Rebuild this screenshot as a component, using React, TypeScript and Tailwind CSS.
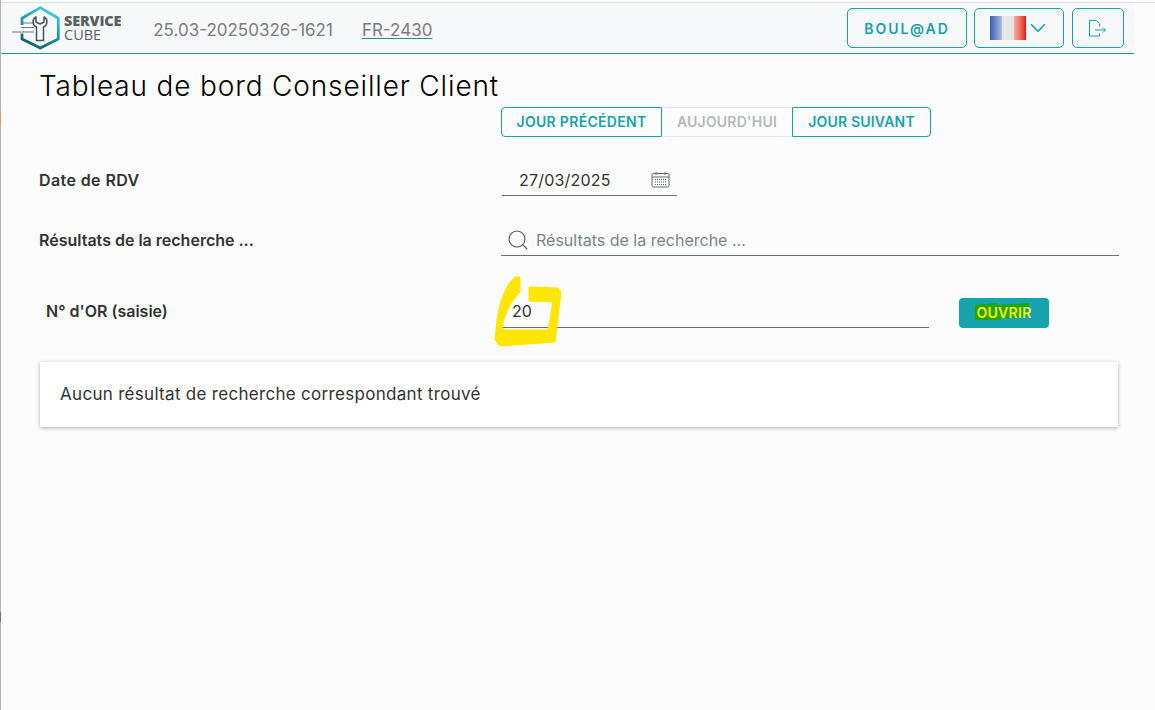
import { ChevronDown, Search } from 'lucide-react'

function Logo() {
  return (
    <svg width="50" height="44" viewBox="10 6 50 44" fill="none">
      <defs>
        <linearGradient id="hex" x1="50" y1="8" x2="30" y2="48" gradientUnits="userSpaceOnUse">
          <stop offset="0" stopColor="#3fd3e0" />
          <stop offset="1" stopColor="#0d5c60" />
        </linearGradient>
      </defs>
      <path d="M21 25 V18.3 L39.3 7.6 L57.3 18.3 V39 L39.3 48 L21 39 V33.5" stroke="url(#hex)" strokeWidth="2.8" strokeLinejoin="round" />
      <path d="M11 32 H33 M20 27.5 H33 M20 23 H32" stroke="#70777a" strokeWidth="1" />
      <path d="M35 17 C31 19 31 25 35.5 27 V40.5 H42.5 V27 C47 25 47 19 43 17 V22 L39 24 L35 22 Z" stroke="#4b5256" strokeWidth="1.5" strokeLinejoin="round" fill="#f6f8fa" />
    </svg>
  )
}

function Calendar() {
  return (
    <svg width="19" height="17" viewBox="0 0 19 17" fill="none" stroke="#5f6b73">
      <rect x="1" y="2.5" width="17" height="13.5" rx="1.5" />
      <path d="M1 6 H18 M5 1 V4 M14 1 V4" />
      <path d="M4 8.5 H15 M4 11 H15 M4 13.5 H15" strokeDasharray="1 1" />
    </svg>
  )
}

function Exit() {
  return (
    <svg width="18" height="17" viewBox="0 0 18 17" fill="none" stroke="#16a3ab" strokeWidth="1">
      <path d="M10.5 6.5 V3.5 L7.5 .5 H.5 V16 H10.5 V13.5" />
      <path d="M6 10 H16.5 M14 7.5 L16.5 10 L14 12.5" />
    </svg>
  )
}

export default function App() {
  return (
    <div className="relative h-[710px] w-[1155px] overflow-hidden bg-[#fcfcfd] pl-[2px] font-['Inter',sans-serif] text-[#333]">
      <div className="-ml-[2px] h-[3px] border-b border-[#e2e2e2] bg-white" />
      <header className="-ml-px flex h-[51px] w-[1133px] items-center border-b border-[#1f9e94] bg-[#f6f8fa]">
        <div className="ml-[10px] flex items-center">
          <Logo />
          <div className="ml-[3px] flex flex-col font-['Open_Sans',sans-serif] text-[14.5px] leading-[14px] text-[#5a5f63]">
            <span className="font-extrabold tracking-[-0.2px]">SERVICE</span>
            <span>CUBE</span>
          </div>
        </div>
        <span className="ml-[32px] mt-[5px] text-[17px] text-[#7d7d7d]">25.03-20250326-1621</span>
        <span className="ml-[29px] mt-[5px] text-[17px] text-[#7d7d7d] underline decoration-[#1f8f88] underline-offset-2">FR-2430</span>
        <div className="ml-auto mr-[10px] flex items-center">
          <button className="flex h-10 w-[120px] items-center justify-center rounded-[5px] border border-[#16a3ab] text-[14px] font-semibold tracking-[2px] text-[#16a3ab]">
            BOUL@AD
          </button>
          <button className="ml-[7px] flex h-10 w-[90px] items-center justify-center gap-0 rounded-[5px] border border-[#16a3ab] pl-[2px]">
            <span className="flex h-[24px] w-[36px] shadow-[inset_0_0_3px_rgba(0,0,0,0.3)]">
              <span className="flex-1 bg-gradient-to-r from-[#3a5fb0] to-[#a9bce6]" />
              <span className="flex-1 bg-[#e6e6e6]" />
              <span className="flex-1 bg-gradient-to-r from-[#f6a89d] to-[#e40000]" />
            </span>
            <ChevronDown className="ml-[-1px] h-[26px] w-[26px] text-[#16a3ab]" strokeWidth={1.6} />
          </button>
          <button className="ml-2 flex h-10 w-[52px] items-center justify-center rounded-[5px] border border-[#16a3ab]">
            <Exit />
          </button>
        </div>
      </header>

      <h1 className="ml-[37px] mt-[14px] text-[28px] font-light leading-[36px] tracking-[0.85px] text-black">Tableau de bord Conseiller Client</h1>

      <div className="ml-[499px] mt-[3px] flex h-[30px] text-[14px] font-semibold">
        <button className="w-[161px] rounded-l-[4px] border border-[#16a3ab] pb-[2px] tracking-[0.3px] text-[#16a3ab]">JOUR PRÉCÉDENT</button>
        <button className="w-[130px] border-y border-[#e4e6e8] pb-[2px] tracking-[0.2px] text-[#b4b9bd]">AUJOURD'HUI</button>
        <button className="w-[139px] rounded-r-[4px] border border-[#16a3ab] pb-[2px] tracking-[0.2px] text-[#16a3ab]">JOUR SUIVANT</button>
      </div>

      <div className="mt-[27px] flex h-[32px] items-center pl-[37px]">
        <span className="w-[463px] text-[16px] font-semibold tracking-[0.4px]">Date de RDV</span>
        <div className="flex h-[32px] w-[175px] items-center justify-between border-b border-[#66727a] pl-[17px] pr-[7px] text-[16px] tracking-[0.2px]">
          27/03/2025
          <Calendar />
        </div>
      </div>

      <div className="mt-[28px] flex h-[32px] items-center pl-[37px]">
        <span className="w-[462px] text-[16px] font-semibold">Résultats de la recherche ...</span>
        <div className="flex h-[32px] w-[618px] items-center border-b border-[#66727a] pl-[5px] text-[16px] text-[#7b848a]">
          <Search className="h-6 w-6 text-[#555]" strokeWidth={1.1} />
          <span className="ml-[6px]">Résultats de la recherche ...</span>
        </div>
      </div>

      <div className="mt-[30px] flex h-[42px] items-end pl-[44px]">
        <span className="mb-[5px] w-[456px] text-[16px] font-semibold">N° d'OR (saisie)</span>
        <div className="flex h-[42px] w-[427px] items-center border-b border-[#66727a] pl-[10px] pt-[8px] text-[16px]">20</div>
        <button className="relative ml-[30px] h-[30px] w-[90px] rounded-[4px] bg-[#18a4ac] pb-[2px] text-[14px] font-semibold tracking-[0.3px] text-[#ffee00]">
          <svg className="absolute left-[16px] top-[5px]" width="54" height="17" viewBox="0 0 54 17">
            <path d="M0 2 L22 0 L23 2 L54 0 L54 14 L28 15 L22 17 L0 17 Z" fill="#1fa600" />
          </svg>
          <span className="relative">OUVRI<span className="text-[#e8f27a]">R</span></span>
        </button>
      </div>

      <div className="ml-[38px] mt-[34px] flex h-[65px] w-[1078px] items-center bg-white pl-[20px] text-[17px] tracking-[0.3px] shadow-[0_1px_4px_rgba(0,0,0,0.3)]">
        Aucun résultat de recherche correspondant trouvé
      </div>

      {/* surlignage jaune */}
      <svg className="absolute left-[490px] top-[274px]" width="76" height="76" viewBox="490 274 76 76" fill="none">
        <path
          d="M515 277 L520 277 L520 292 C512 300 505 312 502 327 L504 330 L548 330 L553 302 L529 301 L529 287 L558 288 L561 292 L555 342 L500 346 L495 340 L497 320 C499 305 505 285 515 277 Z"
          fill="#ffe600"
          stroke="#ffe600"
          strokeWidth="1"
          strokeLinejoin="round"
        />
      </svg>

      <div className="absolute left-0 top-0 h-full w-px bg-[#b4b4b4]" />
      <div className="absolute left-0 top-[111px] h-[14px] w-px bg-[#d9a25c]" />
      <div className="absolute left-0 top-[612px] h-[10px] w-px bg-[#5b7bb0]" />
    </div>
  )
}
